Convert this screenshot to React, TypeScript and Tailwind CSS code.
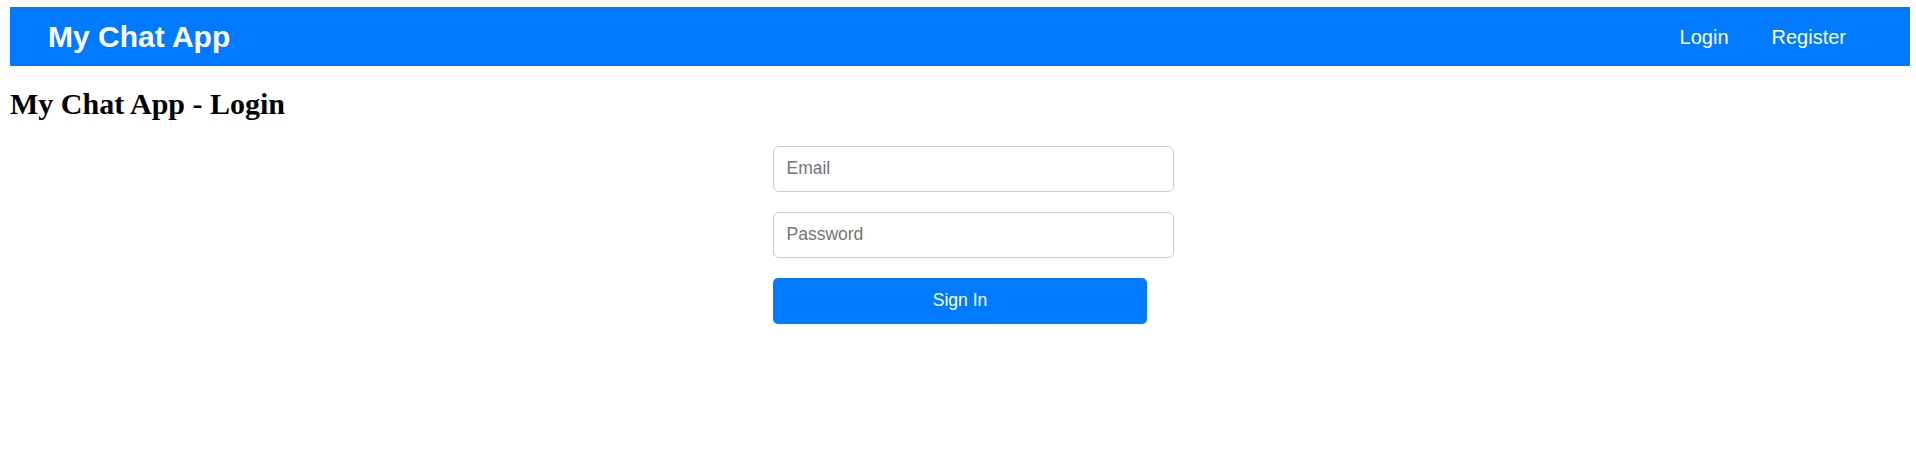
export default function App() {
  return (
    <div className="min-h-[452px] bg-white" style={{ fontFamily: "Arial" }}>
      <div className="ml-[10px] w-[1900px] pt-[7px]">
        {/* NAVBAR */}
        <nav className="flex h-[59px] items-center justify-between bg-[#007bff] pl-[38px] pr-[64px] font-['Liberation_Sans',Arial,sans-serif] text-white">
          <span className="text-[30px] font-bold">My Chat App</span>
          <div className="flex gap-[43px] text-[20px]">
            <a>Login</a>
            <a>Register</a>
          </div>
        </nav>

        {/* TITULO */}
        <h2 className="mt-[21px] mb-[24px] font-['Liberation_Serif','Times_New_Roman',serif] text-[30px] leading-[34.5px] font-bold text-black">
          My Chat App - Login
        </h2>

        {/* FORM */}
        <form className="mx-auto flex w-[374px] flex-col gap-[20px] font-['Liberation_Sans',Arial,sans-serif] text-[17.5px]">
          <input
            type="email"
            placeholder="Email"
            className="h-[46px] w-[401px] rounded-[6px] border border-[#ccc] px-[12.5px] text-black outline-none placeholder:text-[#757575]"
          />
          <input
            type="password"
            placeholder="Password"
            className="h-[46px] w-[401px] rounded-[6px] border border-[#ccc] px-[12.5px] text-black outline-none placeholder:text-[#757575]"
          />
          <button
            type="button"
            className="h-[46px] w-[374px] rounded-[5px] bg-[#007bff] text-white"
          >
            Sign In
          </button>
        </form>
      </div>
    </div>
  );
}
